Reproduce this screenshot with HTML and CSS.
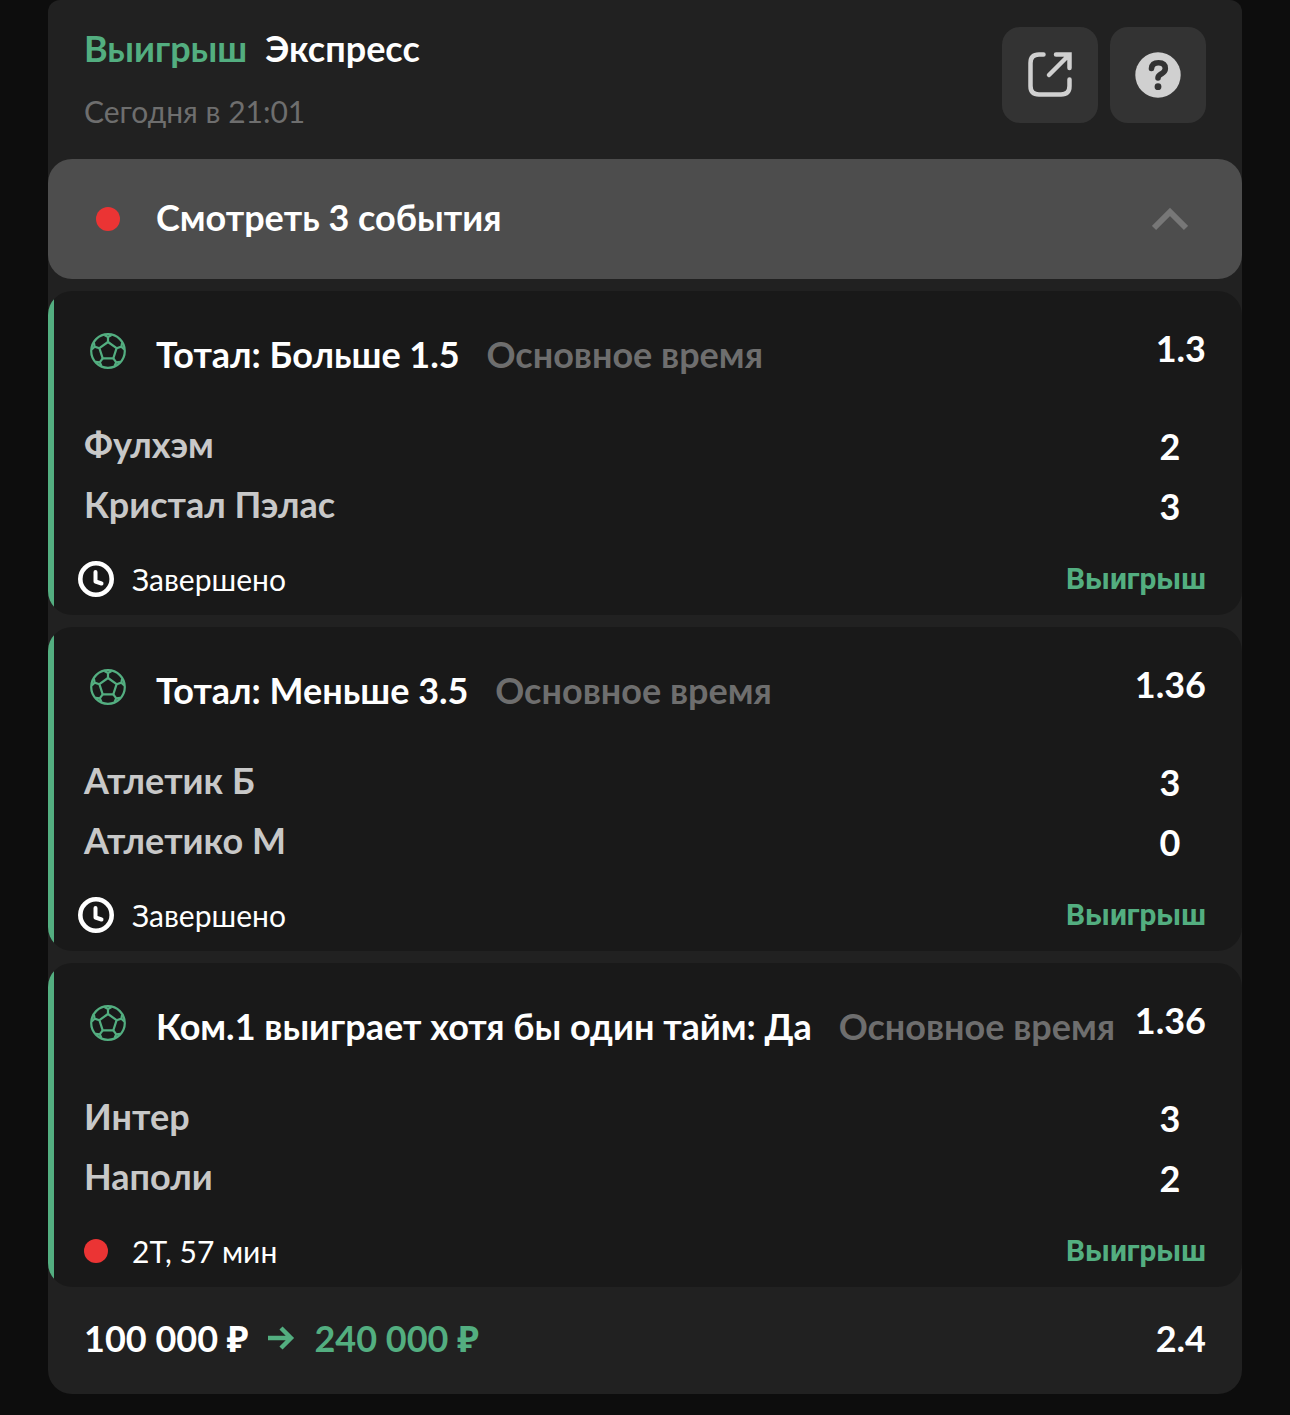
FILE: index.html
```html
<!DOCTYPE html>
<html lang="ru">
<head>
    <meta charset="UTF-8">
    <meta name="viewport" content="width=device-width, initial-scale=1.0">
    <title>Экспресс</title>
    <link rel="stylesheet" href="styles.css">
</head>
<body>
    <!-- Shared icons -->
    <svg class="sprite" aria-hidden="true">
        <symbol id="ball" viewBox="0 0 36 36">
            <g fill="none" stroke="currentColor" stroke-width="2.2" stroke-linejoin="round">
                <circle cx="18" cy="18" r="16.8"/>
                <path d="M18 9 L26.600 15.200 L23.300 25.300 H12.700 L9.400 15.200 Z"/>
                <path d="M18 9 V3 M14.500 2 L18 4 L21.500 2"/>
                <path d="M18 9 V3 M14.500 2 L18 4 L21.500 2" transform="rotate(72 18 18)"/>
                <path d="M18 9 V3 M14.500 2 L18 4 L21.500 2" transform="rotate(144 18 18)"/>
                <path d="M18 9 V3 M14.500 2 L18 4 L21.500 2" transform="rotate(216 18 18)"/>
                <path d="M18 9 V3 M14.500 2 L18 4 L21.500 2" transform="rotate(288 18 18)"/>
            </g>
        </symbol>
        <symbol id="clock" viewBox="0 0 36 36">
            <circle cx="18" cy="18" r="15.7" fill="none" stroke="currentColor" stroke-width="4.6"/>
            <path d="M17.5 11 V20.5 L23.5 22.5" fill="none" stroke="currentColor" stroke-width="4" stroke-linecap="round" stroke-linejoin="round"/>
        </symbol>
    </svg>

    <div class="bet">
        <header class="bet-header">
            <div class="bet-info">
                <h1><span class="win">Выигрыш</span> <span>Экспресс</span></h1>
                <time>Сегодня в 21:01</time>
            </div>
            <div class="actions">
                <button type="button" class="icon-button" aria-label="Поделиться">
                    <svg width="48" height="48" viewBox="0 0 48 48" fill="none" stroke="currentColor" stroke-width="4.5" stroke-linecap="round">
                        <path d="M17.5 3.5 H13 Q4.5 3.5 4.5 12 V35 Q4.5 43.5 13 43.5 H35 Q43.5 43.5 43.5 35 V28.5"/>
                        <path d="M30 3.5 H43.5 V17 M43 4 L23 24"/>
                    </svg>
                </button>
                <button type="button" class="icon-button" aria-label="Помощь">
                    <svg width="48" height="48" viewBox="0 0 48 48">
                        <circle cx="24" cy="24" r="22.7" fill="currentColor"/>
                        <path d="M17.5 17.5 Q18 11.8 24.5 11.8 Q31.3 11.8 31.3 17.5 Q31.3 20.5 27.5 22.8 Q24 24.8 24 27" fill="none" stroke="#333" stroke-width="5.6" stroke-linecap="round"/>
                        <circle cx="24" cy="35.7" r="3.4" fill="#333"/>
                    </svg>
                </button>
            </div>
        </header>

        <button type="button" class="toggle" aria-expanded="true">
            <span class="toggle-icon"><span class="live-dot"></span></span>
            <span class="toggle-text">Смотреть 3 события</span>
            <svg class="chevron" width="36" height="24" viewBox="0 0 36 24">
                <path d="M2 21 L18 5 L34 21" fill="none" stroke="currentColor" stroke-width="6"/>
            </svg>
        </button>

        <div class="events">
            <section class="event">
                <div class="event-top">
                    <svg class="ball"><use href="#ball"/></svg>
                    <h2>Тотал: Больше 1.5 <span class="period">Основное время</span></h2>
                    <span class="odds">1.3</span>
                </div>
                <table class="score">
                    <tr><th scope="row">Фулхэм</th><td>2</td></tr>
                    <tr><th scope="row">Кристал Пэлас</th><td>3</td></tr>
                </table>
                <div class="event-bottom">
                    <span class="status-icon"><svg class="clock"><use href="#clock"/></svg></span>
                    <span class="status">Завершено</span>
                    <span class="result">Выигрыш</span>
                </div>
            </section>

            <section class="event">
                <div class="event-top">
                    <svg class="ball"><use href="#ball"/></svg>
                    <h2>Тотал: Меньше 3.5 <span class="period">Основное время</span></h2>
                    <span class="odds">1.36</span>
                </div>
                <table class="score">
                    <tr><th scope="row">Атлетик Б</th><td>3</td></tr>
                    <tr><th scope="row">Атлетико М</th><td>0</td></tr>
                </table>
                <div class="event-bottom">
                    <span class="status-icon"><svg class="clock"><use href="#clock"/></svg></span>
                    <span class="status">Завершено</span>
                    <span class="result">Выигрыш</span>
                </div>
            </section>

            <section class="event">
                <div class="event-top">
                    <svg class="ball"><use href="#ball"/></svg>
                    <h2>Ком.1 выиграет хотя бы один тайм: Да <span class="period">Основное время</span></h2>
                    <span class="odds">1.36</span>
                </div>
                <table class="score">
                    <tr><th scope="row">Интер</th><td>3</td></tr>
                    <tr><th scope="row">Наполи</th><td>2</td></tr>
                </table>
                <div class="event-bottom">
                    <span class="status-icon"><span class="live-dot"></span></span>
                    <span class="status">2Т, 57 мин</span>
                    <span class="result">Выигрыш</span>
                </div>
            </section>
        </div>

        <footer class="bet-footer">
            <span>100 000 ₽</span>
            <svg class="arrow" width="28" height="24" viewBox="0 0 28 24" fill="none" stroke="currentColor" stroke-width="4.4">
                <path d="M1 12 H24 M14 2 L24 12 L14 22"/>
            </svg>
            <span class="win">240 000 ₽</span>
            <span class="total">2.4</span>
        </footer>
    </div>
</body>
</html>
```
FILE: styles.css
```css
* {
    box-sizing: border-box;
}

body {
    margin: 0;
    padding: 0 48px 20px;
    background-color: #0d0d0d;
    color: #fff;
    font-family: Lato, "Noto Sans", sans-serif;
    font-size: 36px;
    font-weight: 700;
    line-height: 48px;
}

button {
    padding: 0;
    border: none;
    font: inherit;
    color: inherit;
    cursor: pointer;
}

.sprite {
    display: none;
}

.bet {
    background-color: #212121;
    border-radius: 12px 12px 24px 24px;
}

/* Header */
.bet-header {
    display: flex;
    justify-content: space-between;
    padding: 27px 36px 24px;
}

h1,
h2 {
    margin: 0;
    font-size: 36px;
    font-weight: 700;
    line-height: 48px;
}

.bet-info h1 {
    display: flex;
    gap: 18px;
    line-height: 42px;
}

.bet-info time {
    display: block;
    margin-top: 18px;
    color: #6e6e6e;
    font-size: 30px;
    font-weight: 400;
}

.win {
    color: #53ae80;
}

.actions {
    display: flex;
    gap: 12px;
}

.icon-button {
    display: flex;
    align-items: center;
    justify-content: center;
    width: 96px;
    height: 96px;
    border-radius: 18px;
    background-color: #333;
    color: #d0d0d0;
}

/* Expand / collapse bar */
.toggle {
    display: flex;
    align-items: center;
    gap: 24px;
    width: 100%;
    height: 120px;
    padding: 0 54px 0 36px;
    border-radius: 24px;
    background-color: #4d4d4d;
    text-align: left;
}

.toggle-icon {
    display: flex;
    justify-content: center;
    width: 48px;
}

.toggle-text {
    flex: 1;
    padding-bottom: 4px;
}

.live-dot {
    width: 24px;
    height: 24px;
    border-radius: 50%;
    background-color: #eb3434;
}

.chevron {
    color: #777;
}

/* Events */
.events {
    display: flex;
    flex-direction: column;
    gap: 12px;
    margin-top: 12px;
}

.event {
    padding: 36px 36px 12px;
    border-radius: 24px;
    background: linear-gradient(to right, #53ae80 6px, #191919 6px);
}

.event-top {
    display: flex;
    align-items: flex-start;
}

.ball {
    width: 36px;
    height: 36px;
    margin: 6px 30px 0 6px;
    color: #53ae80;
}

.event-top h2 {
    flex: 1;
    padding-top: 3px;
}

.odds {
    line-height: 42px;
}

.period {
    margin-left: 18px;
    color: #6e6e6e;
}

.score {
    width: 100%;
    margin-top: 36px;
    border-collapse: collapse;
}

.score th,
.score td {
    height: 60px;
    padding: 0;
}

.score th {
    color: #c8c8c8;
    font-weight: 700;
    text-align: left;
}

.score td {
    width: 72px;
    padding-top: 4px;
    text-align: center;
}

.event-bottom {
    display: flex;
    align-items: center;
    gap: 18px;
    margin: 21px 0 0 -6px;
    font-size: 30px;
}

.status-icon {
    display: flex;
    justify-content: center;
    width: 36px;
}

.clock {
    width: 36px;
    height: 36px;
}

.status {
    flex: 1;
    font-weight: 400;
}

.result {
    color: #53ae80;
    font-family: Roboto, sans-serif;
}

/* Footer */
.bet-footer {
    display: flex;
    align-items: center;
    gap: 19px;
    padding: 27px 36px 32px;
}

.arrow {
    color: #53ae80;
}

.total {
    margin-left: auto;
}
```
